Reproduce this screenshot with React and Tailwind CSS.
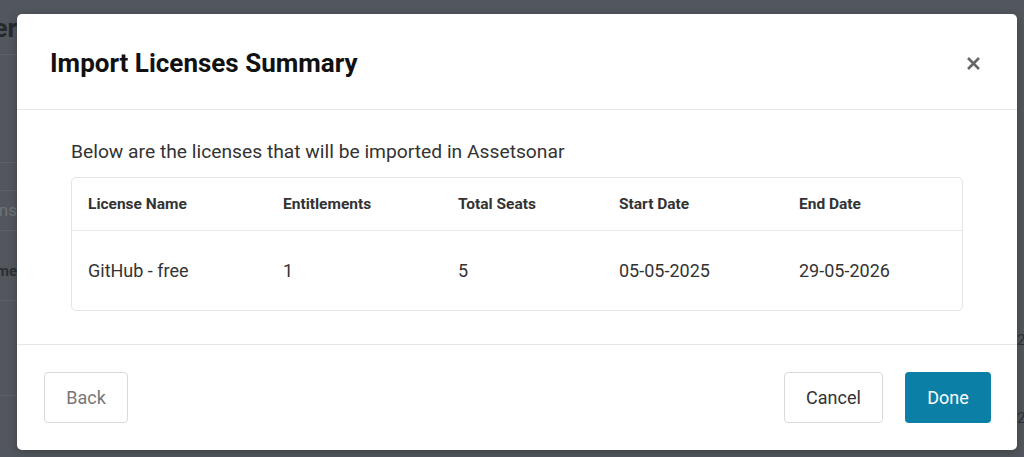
export default function App() {
  const columns = ["License Name", "Entitlements", "Total Seats", "Start Date", "End Date"];
  const rows = [["GitHub - free", "1", "5", "05-05-2025", "29-05-2026"]];

  return (
    <div className="flex h-[457px] w-full overflow-hidden bg-[#52575d] font-['Roboto',sans-serif]">
      {/* strip of the page behind the overlay, left */}
      <div className="flex w-[17px] shrink-0 flex-col overflow-hidden">
        <div className="flex h-[55px] items-center justify-end border-b border-[#5d6268]">
          <span className="pt-[2px] text-[26px] font-bold leading-none text-[#25292d]">er</span>
        </div>
        <div className="h-[108px] border-b border-[#5d6268]" />
        <div className="h-[28px] border-b border-[#5d6268]" />
        <div className="flex h-[40px] items-center justify-end border-b border-[#5d6268]">
          <span className="text-[17px] leading-none text-[#6e7378]">ens</span>
        </div>
        <div className="flex h-[70px] items-center justify-end border-b border-[#5d6268] pt-[12px]">
          <span className="text-[15px] font-bold leading-none text-[#2b2f33]">me</span>
        </div>
        <div className="h-[95px] border-b border-[#5d6268]" />
      </div>

      {/* modal */}
      <div className="mt-[14px] flex h-[436px] w-[1000px] shrink-0 flex-col rounded-[5px] bg-white shadow-[0_2px_8px_rgba(0,0,0,0.25)]">
        <div className="flex h-[96px] shrink-0 items-center justify-between border-b border-[#e6e6e6] pl-[33px] pr-[36px] pt-[4px]">
          <h1 className="text-[26px] font-bold text-[#111]">Import Licenses Summary</h1>
          <svg width="15" height="15" viewBox="0 0 15 15" className="text-[#666]">
            <path d="M2 2L13 13M13 2L2 13" stroke="currentColor" strokeWidth="2.6" />
          </svg>
        </div>

        <div className="flex flex-col px-[54px] pb-[33px] pt-[29px]">
          <p className="text-[19.25px] leading-[26px] text-[#333]">Below are the licenses that will be imported in Assetsonar</p>
          <div className="mt-[12px] rounded-[5px] border border-[#e4e4e4]">
            <div className="grid h-[53px] grid-cols-[195px_175px_161px_180px_1fr] items-center border-b border-[#e9e9e9] px-[16px] pt-[2px]">
              {columns.map(c => (
                <div key={c} className="text-[15.5px] font-bold text-[#333]">{c}</div>
              ))}
            </div>
            {rows.map((r, i) => (
              <div key={i} className="grid h-[79px] grid-cols-[195px_175px_161px_180px_1fr] items-center px-[16px]">
                {r.map((v, j) => (
                  <div key={j} className="text-[18px] text-[#333]">{v}</div>
                ))}
              </div>
            ))}
          </div>
        </div>

        <div className="flex flex-1 items-center justify-between border-t border-[#e6e6e6] pl-[27px] pr-[26px]">
          <button className="h-[51px] w-[84px] rounded-[4px] border border-[#d9d9d9] text-[18px] text-[#777]">Back</button>
          <div className="flex gap-[22px]">
            <button className="h-[51px] w-[99px] rounded-[4px] border border-[#d9d9d9] text-[18px] text-[#333]">Cancel</button>
            <button className="h-[51px] w-[86px] rounded-[4px] bg-[#0b7fa5] text-[18px] text-white">Done</button>
          </div>
        </div>
      </div>

      {/* strip of the page behind the overlay, right */}
      <div className="flex w-[7px] shrink-0 flex-col overflow-hidden pt-[331px]">
        <span className="text-[15px] leading-[18px] text-[#2b2f33]">2</span>
        <span className="mt-[60px] text-[15px] leading-[18px] text-[#2b2f33]">2</span>
      </div>
    </div>
  );
}
